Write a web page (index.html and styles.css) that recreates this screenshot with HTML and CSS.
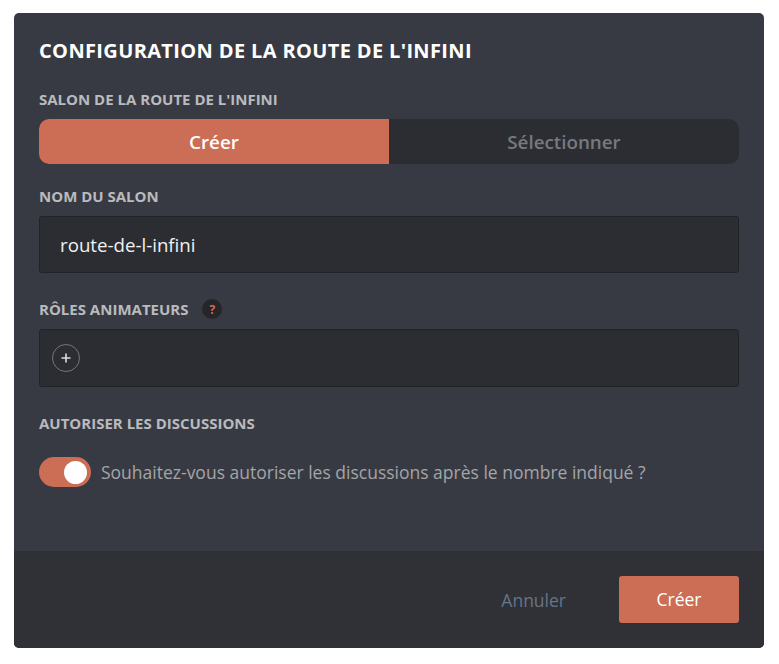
FILE: index.html
```html
<!doctype html>
<html>
	<head>
		<title>Configuration de la route de l'infini</title>
		<meta charset="utf-8" />
		<link rel="stylesheet" href="styles.css">
	</head>
	<body>
		<div class="modal">
			<div class="content">
				<h1 class="title">CONFIGURATION DE LA ROUTE DE L'INFINI</h1>

				<h2 class="label label-first">SALON DE LA ROUTE DE L'INFINI</h2>
				<div class="tabs">
					<div class="tab tab-active">Créer</div>
					<div class="tab">Sélectionner</div>
				</div>

				<h2 class="label label-name">NOM DU SALON</h2>
				<div class="input">route-de-l-infini</div>

				<h2 class="label label-roles">RÔLES ANIMATEURS <span class="help">?</span></h2>
				<div class="roles">
					<div class="add">
						<svg width="10" height="10" viewBox="0 0 10 10"><path d="M5 0.5v9M0.5 5h9" stroke="#dcddde" stroke-width="1.6" fill="none"/></svg>
					</div>
				</div>

				<h2 class="label label-allow">AUTORISER LES DISCUSSIONS</h2>
				<div class="switch-row">
					<div class="switch"><div class="knob"></div></div>
					<span class="switch-text">Souhaitez-vous autoriser les discussions après le nombre indiqué ?</span>
				</div>
			</div>
			<div class="footer">
				<div class="cancel">Annuler</div>
				<div class="submit">Créer</div>
			</div>
		</div>
	</body>
</html>
```
FILE: styles.css
```css
body {
	margin: 0;
	background-color: white;
	font-family: "Open Sans", sans-serif;
}

.modal {
	width: 750px;
	height: 635px;
	margin: 13px 0 0 14px;
	background-color: #383a43;
	border-radius: 5px;
	overflow: hidden;
	display: flex;
	flex-direction: column;
}

.content {
	flex: 1;
	padding: 25px 25px 0 25px;
}

.title {
	margin: 0;
	font-size: 20px;
	letter-spacing: 0.36px;
	line-height: 26px;
	font-weight: 700;
	color: white;
}

.label {
	margin: 0;
	font-size: 15px;
	line-height: 19px;
	font-weight: 700;
	color: #b9bbbe;
	display: flex;
	align-items: center;
}

.label-first {
	margin-top: 26px;
}

.label-name {
	margin-top: 23px;
}

.label-roles {
	margin-top: 26px;
}

.label-allow {
	margin-top: 27px;
}

.help {
	width: 20px;
	height: 20px;
	margin-left: 14px;
	border-radius: 50%;
	background-color: #26262a;
	color: #cc6d55;
	font-size: 12px;
	display: flex;
	align-items: center;
	justify-content: center;
}

.tabs {
	margin-top: 10px;
	height: 45px;
	display: flex;
	background-color: #2c2d32;
	border-radius: 10px;
	overflow: hidden;
}

.tab {
	flex: 1;
	font-size: 18.8px;
	font-weight: 600;
	line-height: 47px;
	text-align: center;
	color: #77797e;
}

.tab-active {
	background-color: #cc6d55;
	color: white;
}

.input {
	margin-top: 10px;
	height: 55px;
	padding-left: 20px;
	background-color: #2c2d32;
	border: 1px solid #222327;
	border-radius: 3px;
	font-size: 18.7px;
	line-height: 55px;
	color: #f0f0f0;
}

.roles {
	margin-top: 10px;
	height: 56px;
	padding-left: 12px;
	background-color: #2c2d32;
	border: 1px solid #222327;
	border-radius: 3px;
	display: flex;
	align-items: center;
}

.add {
	width: 26px;
	height: 26px;
	border: 1px solid #72767d;
	border-radius: 50%;
	display: flex;
	align-items: center;
	justify-content: center;
}

.switch-row {
	margin-top: 24px;
	display: flex;
	align-items: center;
}

.switch {
	width: 52px;
	height: 30px;
	border-radius: 15px;
	background-color: #cc6d55;
	position: relative;
}

.knob {
	position: absolute;
	top: 4px;
	right: 4px;
	width: 23px;
	height: 23px;
	border-radius: 50%;
	background-color: white;
}

.switch-text {
	margin-left: 10px;
	font-size: 17.5px;
	color: #a3a5a8;
}

.footer {
	height: 97px;
	padding-right: 25px;
	background-color: #303136;
	display: flex;
	align-items: center;
	justify-content: flex-end;
}

.cancel {
	margin-right: 53px;
	font-size: 17.5px;
	color: #677487;
}

.submit {
	width: 120px;
	height: 47px;
	line-height: 47px;
	text-align: center;
	background-color: #cc6d55;
	border-radius: 3px;
	font-size: 17.5px;
	color: white;
}
```
